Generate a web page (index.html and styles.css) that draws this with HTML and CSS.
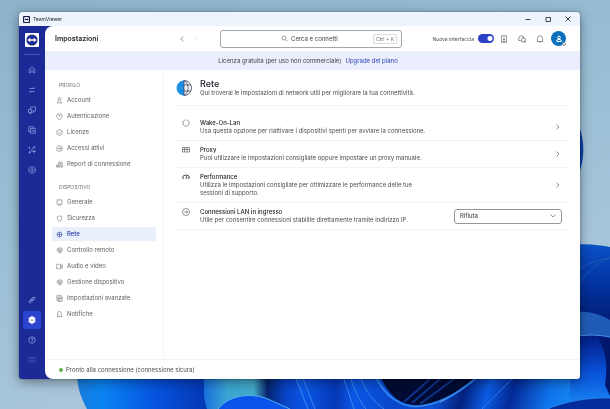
FILE: index.html
```
<!DOCTYPE html>
<html lang="it">
<head>
  <meta charset="UTF-8">
  <meta name="viewport" content="width=device-width, initial-scale=1.0">
  <title>TeamViewer</title>
  <link rel="stylesheet" href="styles.css">
</head>
<body>
  <!-- Desktop wallpaper -->
  <svg class="wallpaper" viewBox="0 0 610 409" preserveAspectRatio="xMidYMax slice" aria-hidden="true">
    <defs>
      <linearGradient id="petal-left" x1="77" y1="0" x2="206" y2="0" gradientUnits="userSpaceOnUse">
        <stop offset="0" stop-color="#1a7ad8"/>
        <stop offset="0.2" stop-color="#0a84f4"/>
        <stop offset="0.6" stop-color="#0654e0"/>
        <stop offset="1" stop-color="#0438b4"/>
      </linearGradient>
      <linearGradient id="petal-teal" x1="204" y1="0" x2="300" y2="0" gradientUnits="userSpaceOnUse">
        <stop offset="0" stop-color="#1a70dc"/>
        <stop offset="0.25" stop-color="#3aa6d4"/>
        <stop offset="0.52" stop-color="#44aac8"/>
        <stop offset="0.66" stop-color="#06246e"/>
        <stop offset="0.85" stop-color="#0744c8"/>
        <stop offset="1" stop-color="#0a50e0"/>
      </linearGradient>
      <linearGradient id="petal-mid" x1="300" y1="0" x2="390" y2="0" gradientUnits="userSpaceOnUse">
        <stop offset="0" stop-color="#0a5cec"/>
        <stop offset="0.4" stop-color="#0638b8"/>
        <stop offset="0.6" stop-color="#0a58e8"/>
        <stop offset="1" stop-color="#0a48cc"/>
      </linearGradient>
      <linearGradient id="petal-right" x1="0" y1="245" x2="0" y2="409" gradientUnits="userSpaceOnUse">
        <stop offset="0" stop-color="#0a50c4"/>
        <stop offset="0.2" stop-color="#0338a8"/>
        <stop offset="0.48" stop-color="#021c74"/>
        <stop offset="1" stop-color="#0a4cd0"/>
      </linearGradient>
      <linearGradient id="petal-low" x1="440" y1="379" x2="580" y2="420" gradientUnits="userSpaceOnUse">
        <stop offset="0" stop-color="#0b54dc"/>
        <stop offset="0.18" stop-color="#04207c"/>
        <stop offset="0.34" stop-color="#0b5ce4"/>
        <stop offset="0.5" stop-color="#042a98"/>
        <stop offset="0.75" stop-color="#0f74ec"/>
        <stop offset="1" stop-color="#1a8af4"/>
      </linearGradient>
      <linearGradient id="petal-inner" x1="0" y1="338" x2="0" y2="409" gradientUnits="userSpaceOnUse">
        <stop offset="0" stop-color="#03208a"/>
        <stop offset="0.5" stop-color="#0a54dc"/>
        <stop offset="1" stop-color="#1a8af4"/>
      </linearGradient>
    </defs>
    <path d="M575 118C586 135 586 165 575 180Z" fill="#0c3fae"/>
    <path d="M77 370C77 388 81 398 87 409H220V370Z" fill="url(#petal-left)"/>
    <path d="M204 370V390C204 398 205 404 207 409H310V370Z" fill="url(#petal-teal)"/>
    <path d="M218 409C230 394 252 393 268 399L290 409Z" fill="#0a54ec"/>
    <path d="M218 409C230 394 252 393 268 399L290 409" fill="none" stroke="#4fb0f0"/>
    <path d="M293 370H440V409H306Z" fill="url(#petal-mid)"/>
    <path d="M296 379L308 409M303 379L315 409M344 379L354 409M351 379C354 390 360 402 366 409M361 379C366 392 374 402 384 409" stroke="#3a86ec" fill="none"/>
    <path d="M380 375C388 396 402 407 422 405C446 402 462 388 480 375Z" fill="#020b34"/>
    <path d="M404 402L430 379M412 403L440 379M420 404L454 379" stroke="#10348c" stroke-width="2" fill="none"/>
    <path d="M422 409C446 403 462 390 480 375H610V409Z" fill="url(#petal-low)"/>
    <path d="M375 375C384 396 402 409 422 406C446 402 462 390 480 375" fill="none" stroke="#2a82f0" stroke-width="2"/>
    <path d="M516 375L482 409" fill="none" stroke="#2a7cec"/>
    <path d="M570 245C586 243 600 245 610 247V345H570Z" fill="url(#petal-right)"/>
    <path d="M578 285C586 272 596 264 610 258M578 270C588 263 600 259 610 258" stroke="#1f58b4" fill="none"/>
    <path d="M570 312C588 310 600 314 610 320V337C598 334 588 335 570 337Z" fill="#1f5cb8"/>
    <path d="M570 337C590 334 600 335 610 337V409H570Z" fill="url(#petal-inner)"/>
    <path d="M570 337C590 334 600 335 610 337" stroke="#4a94e8" fill="none"/>
    <path d="M598 338C606 350 608 366 605 385L610 396V338Z" fill="#03186c"/>
    <path d="M545 410C565 401 590 397 611 398V410Z" fill="#042c9c" stroke="#2a86f0"/>
  </svg>

  <div class="window">
    <div class="titlebar">
      <svg class="titlebar-logo" viewBox="0 0 14 14" aria-hidden="true">
        <rect width="14" height="14" rx="2" fill="#111c50"/>
        <rect x="2" y="2" width="10" height="10" rx="3" fill="#fff"/>
        <path d="M2.500 7L5.500 4.500V6H8.500V4.500L11.500 7L8.500 9.500V8H5.500V9.500Z" fill="#111c50"/>
      </svg>
      <span class="titlebar-name">TeamViewer</span>
      <button class="win-btn" aria-label="Riduci a icona"><svg viewBox="0 0 8 8"><path d="M1.500 4.500H6.500"/></svg></button>
      <button class="win-btn" aria-label="Ingrandisci"><svg viewBox="0 0 8 8"><path d="M2 2.500H6.500V6.500H2Z"/></svg></button>
      <button class="win-btn" aria-label="Chiudi"><svg viewBox="0 0 8 8"><path d="M1.500 1.500L6.500 6.500M6.500 1.500L1.500 6.500"/></svg></button>
    </div>

    <div class="app">
      <nav class="rail" aria-label="Navigazione principale">
        <svg class="rail-logo" viewBox="0 0 14 14" aria-hidden="true">
          <rect width="14" height="14" rx="1" fill="#fff"/>
          <circle cx="7" cy="7" r="5.600" fill="#1b2a8f"/>
          <path d="M2.300 7L5.300 4.700V6.200H8.700V4.700L11.700 7L8.700 9.300V7.800H5.300V9.300Z" fill="#fff"/>
        </svg>
        <div class="rail-line"></div>
        <button class="rail-btn" aria-label="Home"><svg viewBox="0 0 16 16"><path d="M2.500 13.500V6L8 2L13.500 6V13.500H10V10A2 2 0 0 0 6 10V13.500Z"/></svg></button>
        <button class="rail-btn" aria-label="Connessioni"><svg viewBox="0 0 16 16"><path d="M3 5H13L10.500 2.500M13 11H3L5.500 13.500"/></svg></button>
        <button class="rail-btn" aria-label="Dispositivi"><svg viewBox="0 0 16 16"><path d="M5 6V2H15V10H9M1 7H7V13H1ZM3 15H7M11 10V13H9"/></svg></button>
        <button class="rail-btn" aria-label="Sessioni"><svg viewBox="0 0 16 16"><path d="M11 4V1.500H1.500V11H4M5 5H14.500V14.500H5ZM7 9.800H12M10.500 8L12.300 9.800L10.500 11.500"/></svg></button>
        <button class="rail-btn" aria-label="Automazione"><svg viewBox="0 0 16 16"><path d="M1 3L3 2V7M1 14H4L11 2H14M12.500 0.500L14.500 2L12.500 4M12 7V15M8 11H16M3 10V14"/></svg></button>
        <button class="rail-btn" aria-label="Assistenza"><svg viewBox="0 0 16 16"><path d="M5 2H11L14.500 5V11L11 14H5L1.500 11V5ZM10.500 6.500A3 3 0 1 0 10.500 10M8 8H13"/></svg></button>
        <div class="rail-space"></div>
        <button class="rail-btn" aria-label="Collegamenti"><svg viewBox="0 0 16 16"><path d="M7 6L9 3H14V6L11 8H7ZM2 10L4 8H8L9 10L6 13L3 14ZM4 11L11 5"/></svg></button>
        <button class="rail-btn active" aria-label="Impostazioni"><svg viewBox="0 0 16 16"><path d="M6.300 1H9.700L10.300 3.200L12.800 2.800L14.500 5.800L13 8L14.500 10.200L12.800 13.200L10.300 12.800L9.700 15H6.300L5.700 12.800L3.200 13.200L1.500 10.200L3 8L1.500 5.800L3.200 2.800L5.700 3.200Z" fill="#fff"/><circle cx="8" cy="8" r="1.700" fill="#2b45cf" stroke="none"/></svg></button>
        <button class="rail-btn" aria-label="Guida"><svg viewBox="0 0 16 16"><circle cx="8" cy="8" r="6.500"/><path d="M6 6.500A2 2 0 1 1 8 8.500V10M8 11V12.500"/></svg></button>
        <button class="rail-btn dim" aria-label="Altre app"><svg viewBox="0 0 16 16"><path d="M2 3H5V6H2ZM7 3H10V6H7ZM12 3H15V6H12ZM2 9H5V12H2ZM7 9H10V12H7ZM12 9H15V12H12Z"/></svg></button>
      </nav>

      <div class="page">
        <header class="topbar">
          <h1>Impostazioni</h1>
          <div class="history">
            <button aria-label="Indietro"><svg class="icon" viewBox="0 0 16 16"><path d="M10.500 3L5.500 8L10.500 13"/></svg></button>
            <button aria-label="Avanti" disabled><svg class="icon" viewBox="0 0 16 16"><path d="M6 5L9 8L6 11"/></svg></button>
          </div>
          <label class="search">
            <svg class="icon" viewBox="0 0 16 16"><circle cx="7" cy="7" r="4.500"/><path d="M10.500 10.500L14.500 14.500"/></svg>
            <input type="text" placeholder="Cerca e connetti" aria-label="Cerca e connetti">
            <kbd>Ctrl + K</kbd>
          </label>
          <div class="tools">
            <label class="switch">Nuova interfaccia <input type="checkbox" role="switch" checked></label>
            <button aria-label="Download"><svg class="icon" viewBox="0 0 16 16"><path d="M3 1.500H13V14.500H3ZM8 4V10M5.500 8L8 10.500L10.500 8M5 12.500H11"/></svg></button>
            <button aria-label="Chat"><svg class="icon" viewBox="0 0 16 16"><path d="M5.500 11H1.500V6.500A5 5 0 0 1 11.500 6.500M7 9A4 4 0 1 1 11 13.500H7ZM12 13L14.500 15V11"/></svg></button>
            <button aria-label="Notifiche"><svg class="icon" viewBox="0 0 16 16"><path d="M3 12V6.500A5 5 0 0 1 13 6.500V12L14 13H2ZM6.500 15H9.500"/></svg></button>
            <button class="avatar" aria-label="Profilo">
              <svg viewBox="0 0 16 16"><circle cx="8" cy="5" r="2.700"/><path d="M3.500 13V12A3 3 0 0 1 6 9H10A3 3 0 0 1 12.500 12V13Z"/></svg>
              <span class="status"></span>
            </button>
          </div>
        </header>

        <div class="banner">
          <span>Licenza gratuita (per uso non commerciale)</span>
          <a href="#">Upgrade del piano</a>
        </div>

        <div class="content">
          <aside class="sidebar">
            <h2>PROFILO</h2>
            <a href="#"><svg class="icon" viewBox="0 0 16 16"><circle cx="8" cy="4.500" r="3"/><path d="M6 8L3 13.500H13L10 8"/></svg>Account</a>
            <a href="#"><svg class="icon" viewBox="0 0 16 16"><path d="M8 1.500L14 4V8C14 11 11 14 8 15C5 14 2 11 2 8V4ZM8 5V8.500M6 6.500H10"/></svg>Autenticazione</a>
            <a href="#"><svg class="icon" viewBox="0 0 16 16"><circle cx="8" cy="8" r="6.500"/><path d="M5 8L7.500 10.500L12 5.500"/></svg>Licenze</a>
            <a href="#"><svg class="icon" viewBox="0 0 16 16"><circle cx="8" cy="8" r="6.500"/><path d="M4 8H11.500M9 5L12 8L9 11"/></svg>Accessi attivi</a>
            <a href="#"><svg class="icon" viewBox="0 0 16 16"><path d="M1.500 14V9H4V14ZM6 14V3H9V14ZM11 2C15 3 15 6 15 8V14H11.500Z"/></svg>Report di connessione</a>
            <h2>DISPOSITIVO</h2>
            <a href="#"><svg class="icon" viewBox="0 0 16 16"><path d="M2.500 2H13.500V12H2.500ZM5 14.500H11"/></svg>Generale</a>
            <a href="#"><svg class="icon" viewBox="0 0 16 16"><path d="M8 2L13 4V8C13 11 10.500 13 8 14C5.500 13 3 11 3 8V4Z"/></svg>Sicurezza</a>
            <a href="#" class="current" aria-current="page"><svg class="icon" viewBox="0 0 16 16"><circle cx="8" cy="8" r="5.500"/><path d="M2 8H14M8 2V14"/></svg>Rete</a>
            <a href="#"><svg class="icon" viewBox="0 0 16 16"><path d="M3 4L9 1.500L14 4V10L8 14.500M3 4V10L6 12M6 5H11V9H6ZM8 9V14"/></svg>Controllo remoto</a>
            <a href="#"><svg class="icon" viewBox="0 0 16 16"><path d="M1.500 3H10.500V13H1.500ZM10.500 7L14.500 4V12L10.500 9"/></svg>Audio e video</a>
            <a href="#"><svg class="icon" viewBox="0 0 16 16"><path d="M3 4L9 1.500L14 4V10L8 14.500M3 4V10L6 12M6 5H11V9H6ZM8 9V14"/></svg>Gestione dispositivo</a>
            <a href="#"><svg class="icon" viewBox="0 0 16 16"><path d="M12 4V1.500H2V12H5M5 5H14V14.500H5ZM5 8H14M8.500 8V14.500"/></svg>Impostazioni avanzate</a>
            <a href="#"><svg class="icon" viewBox="0 0 16 16"><path d="M4 12V5A4 4 0 0 1 12 5V12L13.500 13H2.500Z"/></svg>Notifiche</a>
          </aside>

          <main>
            <div class="intro">
              <svg class="globe" viewBox="0 0 32 32" aria-hidden="true">
                <path d="M16 1A15 15 0 0 0 16 31Z" fill="#2196e8"/>
                <path d="M16 1A15 15 0 0 1 16 31Z" fill="#fff"/>
                <g fill="none" stroke="#26334d" stroke-width="1.500">
                  <path d="M16 1A15 15 0 0 1 16 31ZM16 1C27 8 27 24 16 31M16 10H29M16 22H29"/>
                </g>
                <path d="M3 10H16M3 22H16M16 1C5 8 5 24 16 31" fill="none" stroke="#1478c8"/>
              </svg>
              <div>
                <h2>Rete</h2>
                <p>Qui troverai le impostazioni di network utili per migliorare la tua connettività.</p>
              </div>
            </div>

            <div class="settings">
              <div class="row">
                <svg class="row-icon" viewBox="0 0 16 16"><path d="M5.500 2.200A6.300 6.300 0 1 0 10.500 2.200M8 1V3"/></svg>
                <div class="row-text">
                  <h3>Wake-On-Lan</h3>
                  <p>Usa questa opzione per riattivare i dispositivi spenti per avviare la connessione.</p>
                </div>
                <button class="open" aria-label="Apri Wake-On-Lan"><svg class="icon" viewBox="0 0 16 16"><path d="M5 3L10 8L5 13"/></svg></button>
              </div>
              <div class="row">
                <svg class="row-icon" viewBox="0 0 16 16"><path d="M1 3H15V12H1ZM1 7H15M5 3V12M10 3V12"/></svg>
                <div class="row-text">
                  <h3>Proxy</h3>
                  <p>Puoi utilizzare le impostazioni consigliate oppure impostare un proxy manuale.</p>
                </div>
                <button class="open" aria-label="Apri Proxy"><svg class="icon" viewBox="0 0 16 16"><path d="M5 3L10 8L5 13"/></svg></button>
              </div>
              <div class="row">
                <svg class="row-icon gauge" viewBox="0 0 16 16"><path d="M1 10A7 6 0 0 1 15 10L12 11M1 10L4 11M8 12L10 5"/></svg>
                <div class="row-text">
                  <h3>Performance</h3>
                  <p>Utilizza le impostazioni consigliate per ottimizzare le performance delle tue sessioni di supporto.</p>
                </div>
                <button class="open" aria-label="Apri Performance"><svg class="icon" viewBox="0 0 16 16"><path d="M5 3L10 8L5 13"/></svg></button>
              </div>
              <div class="row">
                <svg class="row-icon" viewBox="0 0 16 16"><circle cx="8" cy="8" r="7"/><path d="M4 8H11.500M8.500 5L11.500 8L8.500 11"/></svg>
                <div class="row-text">
                  <h3><label for="lan">Connessioni LAN in ingresso</label></h3>
                  <p>Utile per consentire connessioni stabilite direttamente tramite indirizzo IP.</p>
                </div>
                <div class="select">
                  <select id="lan">
                    <option>Rifiuta</option>
                    <option>Accetta</option>
                  </select>
                  <svg class="icon" viewBox="0 0 16 16"><path d="M3 5L8 10L13 5"/></svg>
                </div>
              </div>
            </div>
          </main>
        </div>

        <footer class="statusbar">
          <span class="dot"></span>
          Pronto alla connessione (connessione sicura)
        </footer>
      </div>
    </div>
  </div>
</body>
</html>
```

FILE: styles.css
```
* {
  box-sizing: border-box;
}
body {
  margin: 0;
  min-height: 100vh;
  padding: 12px 30px 30px 19px;
  display: flex;
  background: linear-gradient(165deg, #8db3cc 0%, #9bc0d6 45%, #b4cadf 100%);
  font-family: Inter, "Liberation Sans", sans-serif;
  font-size: 6px;
  line-height: 8px;
  color: #4a4d55;
}
h1, h2, h3, p {
  margin: 0;
}
a {
  color: inherit;
  text-decoration: none;
}
button, input, select {
  font: inherit;
  color: inherit;
  border: 0;
  margin: 0;
  padding: 0;
  background: none;
}
button {
  display: flex;
  align-items: center;
  justify-content: center;
}
svg {
  display: block;
  flex-shrink: 0;
}
.wallpaper {
  position: fixed;
  inset: 0;
  width: 100%;
  height: 100%;
}
.icon {
  width: 8px;
  height: 8px;
  fill: none;
  stroke: currentColor;
  stroke-width: 1.2;
}

/* Window frame */
.window {
  position: relative;
  flex: 1;
  display: flex;
  flex-direction: column;
  border-radius: 3px;
  overflow: hidden;
  background: #1b2a96;
  box-shadow: 0 3px 12px rgba(0, 0, 0, 0.4), 0 0 2px rgba(0, 0, 0, 0.4);
}
.titlebar {
  display: flex;
  align-items: center;
  height: 14px;
  padding: 0 2px 0 4px;
  background: #eef4fb;
  color: #1d1f26;
}
.titlebar-logo {
  width: 7px;
  height: 7px;
  margin-right: 3px;
}
.titlebar-name {
  flex: 1;
  font-size: 5px;
}
.win-btn {
  width: 20px;
  height: 14px;
}
.win-btn svg {
  width: 8px;
  height: 8px;
  fill: none;
  stroke: #1d1f26;
  stroke-width: 0.8;
}
.app {
  flex: 1;
  display: flex;
}

/* Left rail */
.rail {
  width: 26px;
  display: flex;
  flex-direction: column;
  align-items: center;
  gap: 2px;
  padding: 7px 0 10px;
}
.rail-logo {
  width: 14px;
  height: 14px;
}
.rail-line {
  width: 16px;
  margin: 5px 0 4px;
  border-top: 1px solid #4454b4;
}
.rail-btn {
  width: 18px;
  height: 18px;
  border-radius: 3px;
  color: #a9b6f2;
}
.rail-btn svg {
  width: 8px;
  height: 8px;
  fill: none;
  stroke: currentColor;
  stroke-width: 1.2;
}
.rail-btn.active {
  background: #2b45cf;
  color: #fff;
}
.rail-btn.dim {
  color: #4454b4;
}
.rail-space {
  flex: 1;
}

/* Page */
.page {
  flex: 1;
  min-width: 0;
  display: flex;
  flex-direction: column;
  background: #fff;
  border-radius: 8px 0 0 8px;
  overflow: hidden;
}
.topbar {
  display: flex;
  align-items: center;
  height: 25px;
  padding: 0 14px 0 10px;
}
.topbar h1 {
  flex: 0 1 123px;
  font-size: 7px;
  font-weight: 600;
  color: #22252d;
}
.history {
  display: flex;
  gap: 7px;
  margin-right: 19px;
}
.history button:disabled {
  color: #d8dae0;
}
.search {
  flex: 0 1 182px;
  display: grid;
  grid-template-columns: 1fr auto 50px 1fr;
  align-items: center;
  gap: 3px;
  height: 18px;
  padding: 0 4px;
  border: 1px solid #a4a6ac;
  border-radius: 3px;
}
.search .icon {
  grid-column: 2;
  width: 7px;
  height: 7px;
}
.search input {
  width: 100%;
  outline: none;
}
.search input::placeholder {
  color: #3c3f47;
  opacity: 1;
}
kbd {
  justify-self: end;
  padding: 0 2px;
  border: 1px solid #d9dbe2;
  border-radius: 2px;
  font-family: inherit;
  font-size: 5px;
  color: #6a6d76;
}
.tools {
  flex: 1;
  display: flex;
  align-items: center;
  justify-content: flex-end;
  gap: 10px;
}
.switch {
  display: flex;
  align-items: center;
  gap: 4px;
  margin-right: -4px;
  font-size: 5px;
  white-space: nowrap;
}
.switch input {
  appearance: none;
  width: 16px;
  height: 9px;
  border-radius: 5px;
  background: radial-gradient(circle at 12px 50%, #fff 2px, transparent 3px) #2b40c4;
}
.avatar {
  position: relative;
  width: 15px;
  height: 15px;
  margin-left: -3px;
  border-radius: 50%;
  background: #0a70bc;
}
.avatar svg {
  width: 8px;
  height: 8px;
  fill: none;
  stroke: #fff;
  stroke-width: 2;
}
.status {
  position: absolute;
  right: 0;
  bottom: 0;
  width: 4px;
  height: 4px;
  border: 1px solid #8a8d96;
  border-radius: 50%;
  background: #fff;
}
.banner {
  display: flex;
  align-items: center;
  justify-content: center;
  gap: 4px;
  height: 19px;
  padding-right: 9px;
  background: #ebeefc;
  color: #3c3f47;
}
.banner a {
  color: #2b40b4;
}
.content {
  flex: 1;
  display: flex;
}

/* Settings menu */
.sidebar {
  width: 119px;
  display: flex;
  flex-direction: column;
  gap: 2px;
  padding: 11px 7px 0 7px;
  border-right: 1px solid #f3f3f6;
}
.sidebar h2 {
  margin-bottom: 2px;
  padding: 0 7px;
  font-size: 5px;
  font-weight: 400;
  color: #6a6d76;
}
.sidebar a + h2 {
  margin-top: 10px;
}
.sidebar a {
  display: flex;
  align-items: center;
  gap: 4px;
  height: 14px;
  padding: 0 4px;
  border-radius: 2px;
  color: #5c5f68;
}
.sidebar .icon {
  width: 7px;
  height: 7px;
}
.sidebar a.current {
  background: #eaeffc;
  color: #2536a4;
  font-weight: 500;
}

/* Network settings */
main {
  flex: 1;
  min-width: 0;
  padding: 0 12px;
}
.intro {
  display: flex;
  align-items: center;
  gap: 8px;
  height: 36px;
  border-bottom: 1px solid #f3f3f6;
}
.globe {
  width: 16px;
  height: 16px;
}
.intro h2 {
  font-size: 9px;
  line-height: 11px;
  font-weight: 500;
  color: #22252d;
}
.settings {
  padding-top: 8px;
}
.row {
  display: flex;
  align-items: center;
  padding: 5px 6px;
  border-bottom: 1px solid #f3f3f6;
}
.row-icon {
  align-self: flex-start;
  width: 8px;
  height: 8px;
  margin-right: 10px;
  fill: none;
  stroke: currentColor;
  stroke-width: 1.2;
}
.row-icon.gauge {
  stroke-width: 2;
}
.row-text {
  flex: 1;
}
.row-text h3 {
  font-size: 6px;
  font-weight: 500;
  color: #22252d;
}
.row-text p {
  max-width: 234px;
}
.select {
  display: grid;
  align-items: center;
  width: 108px;
}
.select select {
  grid-area: 1 / 1;
  appearance: none;
  width: 100%;
  height: 15px;
  padding: 0 5px;
  border: 1px solid #94969e;
  border-radius: 3px;
  color: #30333b;
}
.select .icon {
  grid-area: 1 / 1;
  justify-self: end;
  width: 8px;
  height: 8px;
  margin-right: 5px;
  pointer-events: none;
}

.statusbar {
  display: flex;
  align-items: center;
  gap: 3px;
  height: 20px;
  padding: 0 14px;
  border-top: 1px solid #f3f3f6;
}
.dot {
  width: 4px;
  height: 4px;
  border-radius: 50%;
  background: #5fb04a;
}
```
